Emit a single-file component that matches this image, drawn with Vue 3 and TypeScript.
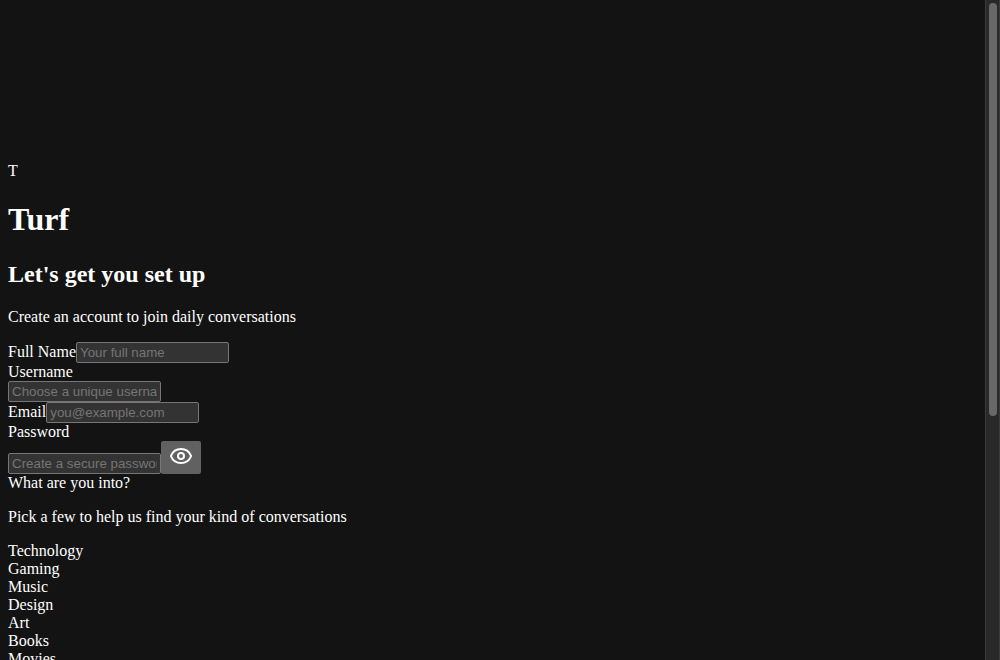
<script setup lang="ts">
import { computed, onBeforeUnmount, onMounted, ref } from 'vue'

const fullName = ref('')
const username = ref('')
const email = ref('')
const password = ref('')
const showPassword = ref(false)

const interests: string[] = ['Technology', 'Gaming', 'Music', 'Design', 'Art', 'Books', 'Movies']

const scroller = ref<HTMLElement | null>(null)
const scrollTop = ref(0)
const viewHeight = ref(1)
const contentHeight = ref(1)

function measure(): void {
  const el = scroller.value
  if (!el) return
  scrollTop.value = el.scrollTop
  viewHeight.value = el.clientHeight
  contentHeight.value = el.scrollHeight
}

const thumbStyle = computed(() => ({
  height: `${(viewHeight.value / contentHeight.value) * 100}%`,
  marginTop: `${Math.round((scrollTop.value / contentHeight.value) * viewHeight.value)}px`,
}))

onMounted(() => {
  measure()
  window.addEventListener('resize', measure)
})
onBeforeUnmount(() => window.removeEventListener('resize', measure))
</script>

<template>
  <div class="page">
    <main ref="scroller" class="scroller" @scroll="measure">
      <div class="signup">
        <header>
          <div class="mark">T</div>
          <h1>Turf</h1>
        </header>
        <h2>Let's get you set up</h2>
        <p>Create an account to join daily conversations</p>
        <form @submit.prevent>
          <div class="field">
            <label for="full-name">Full Name</label>
            <input id="full-name" v-model="fullName" type="text" placeholder="Your full name" />
          </div>
          <div class="field stacked">
            <label for="username">Username</label>
            <input id="username" v-model="username" type="text" placeholder="Choose a unique username" />
          </div>
          <div class="field">
            <label for="email">Email</label>
            <input id="email" v-model="email" type="email" placeholder="you@example.com" />
          </div>
          <div class="field stacked">
            <label for="password">Password</label>
            <div class="password-row">
              <input
                id="password"
                v-model="password"
                :type="showPassword ? 'text' : 'password'"
                placeholder="Create a secure password"
              />
              <button type="button" aria-label="Show password" @click="showPassword = !showPassword">
                <svg
                  viewBox="0 0 24 24"
                  width="24"
                  height="24"
                  fill="none"
                  stroke="currentColor"
                  stroke-width="2"
                  stroke-linecap="round"
                  stroke-linejoin="round"
                  aria-hidden="true"
                >
                  <path d="M2.062 12.348a1 1 0 0 1 0-.696 10.75 10.75 0 0 1 19.876 0 1 1 0 0 1 0 .696 10.75 10.75 0 0 1-19.876 0" />
                  <circle cx="12" cy="12" r="3" />
                </svg>
              </button>
            </div>
          </div>
          <div id="interests-label">What are you into?</div>
          <p>Pick a few to help us find your kind of conversations</p>
          <ul aria-labelledby="interests-label">
            <li v-for="interest in interests" :key="interest">{{ interest }}</li>
          </ul>
        </form>
      </div>
    </main>
    <div class="scrollbar" aria-hidden="true">
      <div class="track">
        <div class="thumb" :style="thumbStyle"></div>
      </div>
    </div>
  </div>
</template>

<style>
body {
  background: #131313;
}
</style>

<style scoped>
.page {
  display: flex;
  height: 100vh;
  background: #131313;
  color: #fff;
  font: 16px/18px "Liberation Serif", "Times New Roman", serif;
}
.scroller {
  flex: 1;
  min-width: 0;
  overflow-y: auto;
  scrollbar-width: none;
}
.scrollbar {
  box-sizing: border-box;
  width: 15px;
  padding: 3px 2px 3px 3px;
  background: #292929;
  border-left: 1px solid #3b3b3b;
  border-right: 1px solid #3b3b3b;
}
.track {
  display: flow-root;
  height: 100%;
}
.thumb {
  border-radius: 4px;
  background: #686868;
}
.signup {
  padding: 162px 8px 378px;
}
h1 {
  margin: 20px 0;
  font-size: 32px;
  line-height: 38px;
}
h2 {
  margin: 22px 0 20px;
  font-size: 24px;
  line-height: 28px;
}
p {
  margin: 16px 0;
}
.field {
  display: flex;
  align-items: baseline;
}
.field.stacked {
  flex-direction: column;
  align-items: flex-start;
}
input {
  box-sizing: border-box;
  width: 153px;
  height: 21px;
  margin: 0;
  padding: 1px 3px;
  border: 1px solid #767676;
  border-radius: 2px;
  background: #333;
  color: #fff;
  font-family: "Liberation Sans", Arial, sans-serif;
}
input::placeholder {
  color: #757575;
  opacity: 1;
}
.password-row {
  display: flex;
  align-items: flex-end;
}
button {
  display: block;
  height: 33px;
  margin: 0;
  padding: 3px 8px 6px;
  border: 0;
  border-radius: 2px;
  background: #616161;
  color: #fff;
}
svg {
  display: block;
}
ul {
  margin: 0;
  padding: 0;
  list-style: none;
}
</style>
